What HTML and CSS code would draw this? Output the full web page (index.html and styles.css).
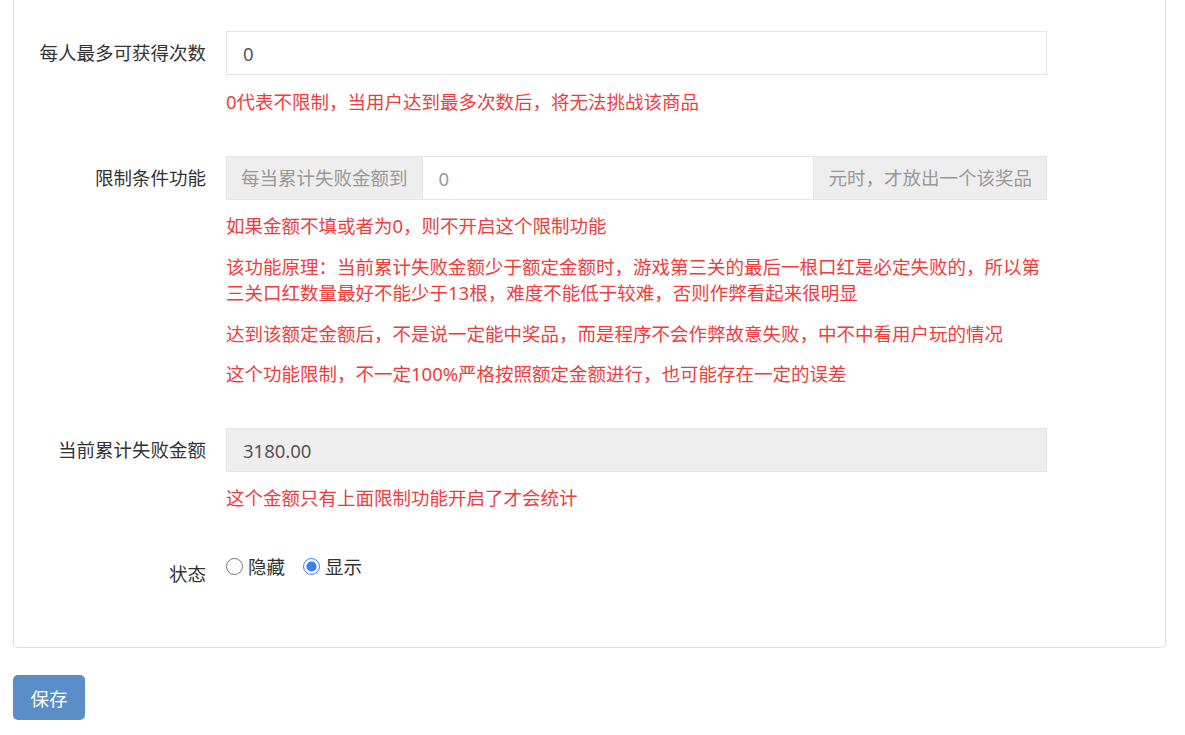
FILE: index.html
```html
<!DOCTYPE html>
<html lang="zh-CN">
<head>
<meta charset="utf-8">
<title>商品设置</title>
<link rel="stylesheet" href="styles.css">
</head>
<body>
<div class="page">
  <div class="panel">
    <form class="form">
      <div class="form-group">
        <label class="control-label">每人最多可获得次数</label>
        <div class="controls">
          <input class="form-control" type="text" value="0">
          <p class="help">0代表不限制，当用户达到最多次数后，将无法挑战该商品</p>
        </div>
      </div>

      <div class="form-group">
        <label class="control-label">限制条件功能</label>
        <div class="controls">
          <div class="input-group">
            <span class="addon">每当累计失败金额到</span>
            <input class="form-control group-input" type="text" placeholder="0">
            <span class="addon">元时，才放出一个该奖品</span>
          </div>
          <p class="help">如果金额不填或者为0，则不开启这个限制功能</p>
          <p class="help">该功能原理：当前累计失败金额少于额定金额时，游戏第三关的最后一根口红是必定失败的，所以第三关口红数量最好不能少于13根，难度不能低于较难，否则作弊看起来很明显</p>
          <p class="help">达到该额定金额后，不是说一定能中奖品，而是程序不会作弊故意失败，中不中看用户玩的情况</p>
          <p class="help">这个功能限制，不一定100%严格按照额定金额进行，也可能存在一定的误差</p>
        </div>
      </div>

      <div class="form-group group-compact">
        <label class="control-label">当前累计失败金额</label>
        <div class="controls">
          <input class="form-control readonly" type="text" value="3180.00" readonly>
          <p class="help">这个金额只有上面限制功能开启了才会统计</p>
        </div>
      </div>

      <div class="form-group group-compact">
        <label class="control-label">状态</label>
        <div class="controls radios">
          <label class="radio-inline"><input type="radio" name="status" value="0"><span>隐藏</span></label>
          <label class="radio-inline"><input type="radio" name="status" value="1" checked><span>显示</span></label>
        </div>
      </div>
    </form>
  </div>
  <button class="btn-save" type="button">保存</button>
</div>
</body>
</html>
```

FILE: styles.css
```css
* {
  box-sizing: border-box;
}

html, body {
  margin: 0;
  padding: 0;
  background: #fff;
}

body {
  font-family: "Noto Sans", "Noto Sans CJK SC", sans-serif;
  font-size: 18.5px;
  line-height: 26.4px;
  color: #333;
}

.page {
  padding: 0 19px 0 13px;
}

.panel {
  border: 1px solid #cde8f1;
  border-top: 0;
  border-radius: 0 0 5px 5px;
  padding: 31px 0 20px 0;
  width: 1153px;
}

.form-group {
  display: flex;
  gap: 20px;
  margin-bottom: 41px;
}

.form-group.group-compact {
  margin-bottom: 40px;
}

.control-label {
  width: 192px;
  flex: none;
  text-align: right;
  padding-top: 9px;
  color: #333;
}

.controls {
  width: 821px;
  flex: none;
}

.form-control {
  display: block;
  width: 100%;
  height: 44px;
  padding: 0 16px;
  border: 1px solid #e4e4e4;
  background: #fff;
  font-family: inherit;
  font-size: 18.5px;
  color: #555;
  outline: none;
}

.form-control::placeholder {
  color: #999;
}

.form-control.readonly {
  background: #eee;
  border-color: #e6e6e6;
}

.input-group {
  display: flex;
  height: 44px;
}

.addon {
  flex: none;
  display: flex;
  align-items: center;
  padding: 0 14px;
  background: #eee;
  border: 1px solid #e6e6e6;
  color: #999;
  white-space: nowrap;
}

.input-group .group-input {
  flex: 1;
  width: auto;
  min-width: 0;
  border-left: 0;
  border-right: 0;
}

.help {
  margin: 14px 0 0 0;
  color: #f03c3c;
}

.controls > .help:first-of-type {
  margin-top: 13px;
}

.form-group:first-child .controls > .help {
  margin-top: 14px;
}

.radios {
  display: flex;
  align-items: center;
  gap: 18px;
  padding-top: 0;
  height: 30px;
}

.radio-inline {
  display: flex;
  align-items: center;
  gap: 5px;
  color: #333;
}

.radio-inline input {
  width: 17px;
  height: 17px;
  margin: 0;
  accent-color: #3b7ff2;
}

.btn-save {
  display: block;
  margin-top: 27px;
  width: 72px;
  height: 45px;
  border: 0;
  border-radius: 5px;
  background: #5b8dc7;
  color: #fff;
  font-family: inherit;
  font-size: 18.5px;
  cursor: pointer;
}
```
